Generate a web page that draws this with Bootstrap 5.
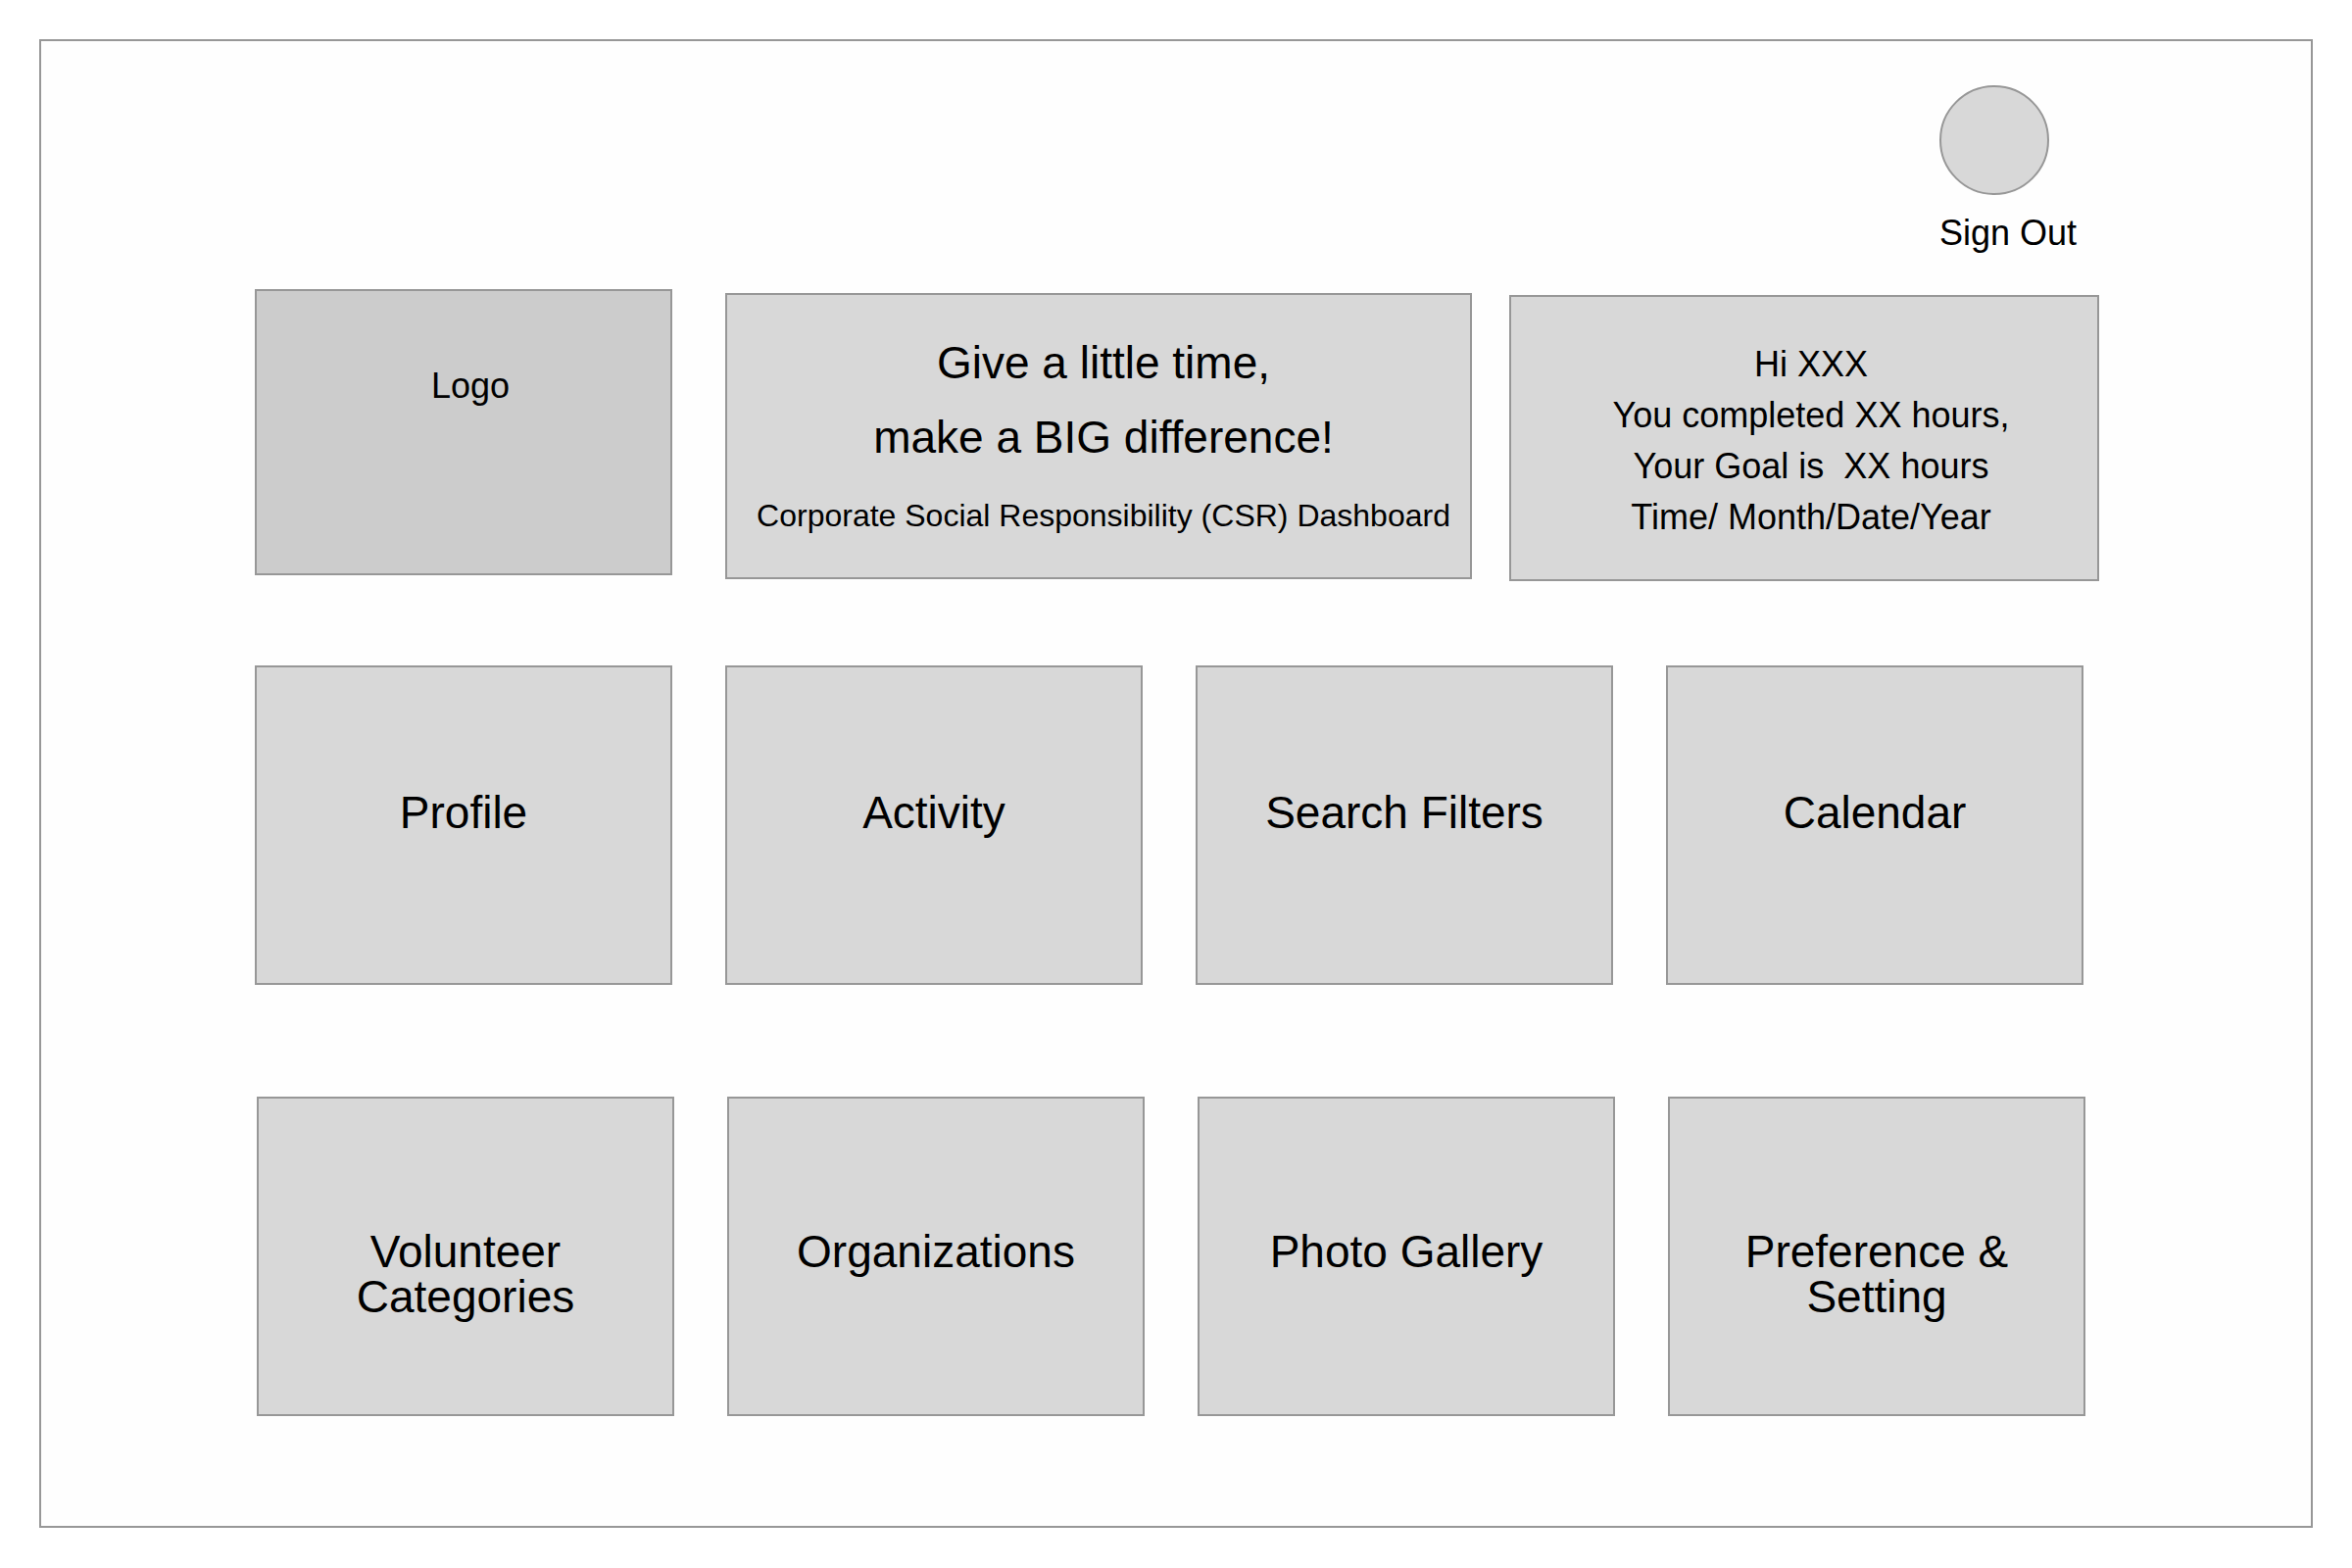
<!DOCTYPE html>
<html lang="en">
<head>
<meta charset="utf-8">
<meta name="viewport" content="width=device-width, initial-scale=1">
<title>Corporate Social Responsibility (CSR) Dashboard</title>
<link href="https://cdn.jsdelivr.net/npm/bootstrap@5.3.0/dist/css/bootstrap.min.css" rel="stylesheet">
<style>
  body { font-family: "Liberation Sans", Arial, sans-serif; color: #000; background: #fff; padding: 40px; }
  .frame { border: 2px solid #979797; background: #fefefe; padding: 45px 216px 112px 218px; }
  .panel, .tile, .avatar { border: 2px solid #979797; background: #d8d8d8; }
  .text-md { font-size: 36px; line-height: 52px; }
  .text-sm { font-size: 32px; line-height: 52px; }
  .text-lg { font-size: 46px; line-height: 76px; }

  .topbar { padding-right: 23px; margin-bottom: 32px; }
  .signout { gap: 13px; height: 164px; color: #000; }
  .avatar { width: 112px; height: 112px; flex: none; }
  .topbar { margin-bottom: 44px; }

  .panels { display: grid; grid-template-columns: 442fr 762fr 602fr; column-gap: 38px; }
  .panel { min-height: 292px; min-width: 0; }
  .panel-brand { margin-right: 16px; background: #ccc; padding: 71px 0 0 14px; }
  .panel-hero { margin-top: 4px; padding: 31px 0 0 10px; }
  .panel-greeting { margin-top: 6px; padding: 43px 0 0 14px; }
  .tagline { margin-bottom: 16px; }

  .tiles { display: grid; grid-template-columns: repeat(4, minmax(0, 1fr)); column-gap: 54px; row-gap: 54px; }
  .tiles-main { margin-top: 86px; padding-right: 16px; }
  .tiles-more { margin-top: 114px; padding: 0 14px 0 2px; }
  .tile { min-height: 326px; padding: 125px 60px 0; font-size: 46px; line-height: 46px; color: #000; }
  .tiles-more .tile { padding-top: 133px; }

  @media (max-width: 1800px) {
    .frame { padding-left: 40px; padding-right: 40px; }
    .panels { grid-template-columns: minmax(0, 1fr); row-gap: 40px; }
    .panel { margin: 0; padding-bottom: 30px; }
    .tiles { grid-template-columns: repeat(auto-fit, minmax(320px, 1fr)); }
    .tiles-main, .tiles-more { padding-left: 0; padding-right: 0; }
    .tile { padding-left: 20px; padding-right: 20px; }
  }
</style>
</head>
<body>
<div class="frame">
  <header>
    <div class="topbar d-flex justify-content-end">
      <button type="button" class="signout text-md d-flex flex-column align-items-start border-0 bg-transparent p-0">
        <span class="avatar rounded-circle"></span>
        <span>Sign Out</span>
      </button>
    </div>
    <div class="panels align-items-start text-center">
      <div class="panel panel-brand text-md">Logo</div>
      <section class="panel panel-hero">
        <h1 class="tagline text-lg fw-normal">Give a little time,<br>make a BIG difference!</h1>
        <p class="text-sm mb-0">Corporate Social Responsibility (CSR) Dashboard</p>
      </section>
      <section class="panel panel-greeting text-md">
        <p class="mb-0">Hi XXX</p>
        <p class="mb-0">You completed XX hours,</p>
        <p class="mb-0">Your Goal is&nbsp; XX hours</p>
        <p class="mb-0">Time/ Month/Date/Year</p>
      </section>
    </div>
  </header>
  <main class="text-center">
    <nav class="tiles tiles-main" aria-label="Main">
      <a class="tile text-decoration-none" href="#">Profile</a>
      <a class="tile text-decoration-none" href="#">Activity</a>
      <a class="tile text-decoration-none" href="#">Search Filters</a>
      <a class="tile text-decoration-none" href="#">Calendar</a>
    </nav>
    <nav class="tiles tiles-more" aria-label="More">
      <a class="tile text-decoration-none" href="#">Volunteer Categories</a>
      <a class="tile text-decoration-none" href="#">Organizations</a>
      <a class="tile text-decoration-none" href="#">Photo Gallery</a>
      <a class="tile text-decoration-none" href="#">Preference &amp; Setting</a>
    </nav>
  </main>
</div>
<script src="https://cdn.jsdelivr.net/npm/bootstrap@5.3.0/dist/js/bootstrap.bundle.min.js"></script>
</body>
</html>
